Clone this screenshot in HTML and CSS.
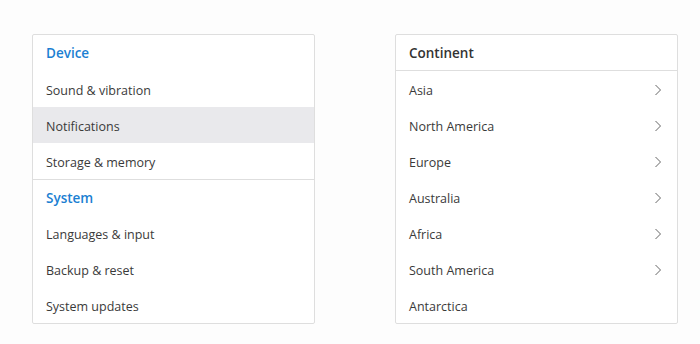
FILE: index.html
```html
<!DOCTYPE html>
<html lang="en">
<head>
    <meta charset="UTF-8">
    <meta name="viewport" content="width=device-width, initial-scale=1.0">
    <title>Lists</title>
    <link rel="stylesheet" href="styles.css">
</head>
<body>
    <main class="page">
        <section class="card">
            <div class="group">
                <div class="group-title">Device</div>
                <div class="item">Sound &amp; vibration</div>
                <div class="item active">Notifications</div>
                <div class="item">Storage &amp; memory</div>
            </div>
            <div class="group">
                <div class="group-title">System</div>
                <div class="item">Languages &amp; input</div>
                <div class="item">Backup &amp; reset</div>
                <div class="item">System updates</div>
            </div>
        </section>

        <section class="card">
            <div class="card-header">Continent</div>
            <div class="item link">Asia <svg class="chevron" viewBox="0 0 8 12"><path d="M1.5 1 L6.5 6 L1.5 11"/></svg></div>
            <div class="item link">North America <svg class="chevron" viewBox="0 0 8 12"><path d="M1.5 1 L6.5 6 L1.5 11"/></svg></div>
            <div class="item link">Europe <svg class="chevron" viewBox="0 0 8 12"><path d="M1.5 1 L6.5 6 L1.5 11"/></svg></div>
            <div class="item link">Australia <svg class="chevron" viewBox="0 0 8 12"><path d="M1.5 1 L6.5 6 L1.5 11"/></svg></div>
            <div class="item link">Africa <svg class="chevron" viewBox="0 0 8 12"><path d="M1.5 1 L6.5 6 L1.5 11"/></svg></div>
            <div class="item link">South America <svg class="chevron" viewBox="0 0 8 12"><path d="M1.5 1 L6.5 6 L1.5 11"/></svg></div>
            <div class="item">Antarctica</div>
        </section>
    </main>
</body>
</html>
```

FILE: styles.css
```css
:root {
    --bg-color: #fdfdfd;
    --card-bg: #ffffff;
    --border-color: #dedede;
    --text-color: #3a3a3a;
    --accent: #1b7fd2;
    --active-bg: #e9e9ec;
}

body {
    margin: 0;
    background: var(--bg-color);
    font-family: "Open Sans", "Noto Sans", sans-serif;
    color: var(--text-color);
}

.page {
    display: flex;
    gap: 80px;
    padding: 34px 0 0 32px;
}

.card {
    width: 281px;
    background: var(--card-bg);
    border: 1px solid var(--border-color);
    border-radius: 2px;
}

.group + .group {
    border-top: 1px solid var(--border-color);
}

.group-title,
.card-header,
.item {
    height: 36px;
    box-sizing: border-box;
    display: flex;
    align-items: center;
    padding: 0 13px;
}

.group-title {
    color: var(--accent);
    font-size: 13.5px;
    font-weight: 600;
}

.group + .group .group-title {
    height: 35px;
}

.card-header {
    border-bottom: 1px solid var(--border-color);
    font-size: 13.5px;
    font-weight: 600;
    color: #333;
}

.item {
    padding-top: 2px;
    font-size: 12.5px;
    justify-content: space-between;
}

.item.active {
    background: var(--active-bg);
}

.chevron {
    width: 8px;
    height: 12px;
    margin-right: 2px;
    fill: none;
    stroke: #666;
    stroke-width: 1;
}
```
